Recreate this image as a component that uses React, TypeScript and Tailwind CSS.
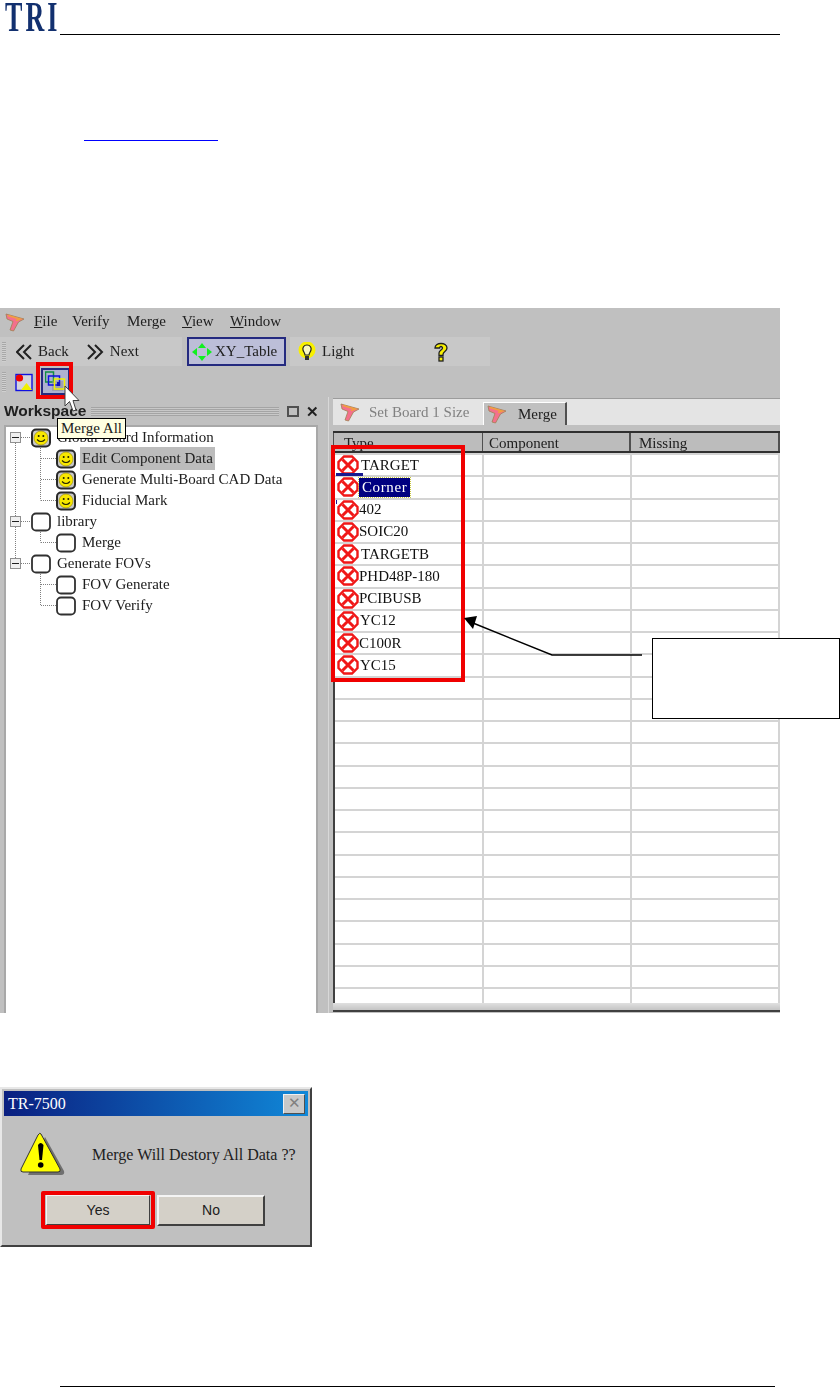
const serif = "font-['Liberation_Serif',serif]";

const rowCount = Array.from({ length: 25 });

const errorRows = [
  { label: "TARGET", gap: "ml-[2px]", cls: "text-[#101010]" },
  { label: "Corner", gap: "ml-0", cls: "bg-[#000080] text-white outline-1 outline-dotted outline-[#c8c840] px-[3px] tracking-[0.6px]" },
  { label: "402", gap: "ml-0", cls: "text-[#101010]" },
  { label: "SOIC20", gap: "ml-0", cls: "text-[#101010]" },
  { label: "TARGETB", gap: "ml-[2px]", cls: "text-[#101010]" },
  { label: "PHD48P-180", gap: "ml-0", cls: "text-[#101010]" },
  { label: "PCIBUSB", gap: "ml-0", cls: "text-[#101010]" },
  { label: "YC12", gap: "ml-[1px]", cls: "text-[#101010]" },
  { label: "C100R", gap: "ml-0", cls: "text-[#101010]" },
  { label: "YC15", gap: "ml-[1px]", cls: "text-[#101010]" },
];

const treeRows = [
  { label: "Global Board Information", depth: 0, smile: true, expander: true },
  { label: "Edit Component Data", depth: 1, smile: true, active: true },
  { label: "Generate Multi-Board CAD Data", depth: 1, smile: true },
  { label: "Fiducial Mark", depth: 1, smile: true },
  { label: "library", depth: 0, smile: false, expander: true },
  { label: "Merge", depth: 1, smile: false },
  { label: "Generate FOVs", depth: 0, smile: false, expander: true },
  { label: "FOV Generate", depth: 1, smile: false },
  { label: "FOV Verify", depth: 1, smile: false },
];

function AppGlyph() {
  return (
    <svg width="20" height="20" viewBox="0 0 20 20" className="shrink-0">
      <path d="M1 2 L19 7 L13.5 10 L8.5 19 L5 18 L8 9.5 L2 7 Z" fill="#f4708c" stroke="#a08050" strokeWidth="0.8" />
      <path d="M3 3.5 L15 7 L11 8.5" fill="none" stroke="#f0a040" strokeWidth="1.8" />
    </svg>
  );
}

function Smiley() {
  return (
    <svg width="20" height="20" viewBox="0 0 20 20" className="shrink-0">
      <rect x="1" y="1.5" width="18" height="17" rx="4" fill="#c8c8c8" stroke="#282828" strokeWidth="2" />
      <circle cx="10" cy="10" r="7" fill="#f8e800" stroke="#807000" strokeWidth="0.5" />
      <circle cx="7.7" cy="8" r="1" fill="#202000" />
      <circle cx="12.3" cy="8" r="1" fill="#202000" />
      <path d="M6 11.5 Q10 15.5 14 11.5" fill="none" stroke="#202000" strokeWidth="1.1" />
    </svg>
  );
}

function EmptyNode() {
  return (
    <svg width="20" height="20" viewBox="0 0 20 20" className="shrink-0">
      <rect x="1" y="1.5" width="18" height="17" rx="4" fill="#fff" stroke="#303030" strokeWidth="1.8" />
    </svg>
  );
}

function ErrorIcon() {
  return (
    <svg width="22" height="20" viewBox="0 0 22 20" className="shrink-0">
      <path d="M7 1.5 H15 L20.5 7 V13 L15 18.5 H7 L1.5 13 V7 Z" fill="#fff" stroke="#f01818" strokeWidth="2.4" />
      <path d="M5.5 4.5 L16.5 15.5 M16.5 4.5 L5.5 15.5" stroke="#f01818" strokeWidth="3" />
    </svg>
  );
}

function Grip() {
  return (
    <div className="h-[20px] w-[4px] shrink-0 bg-[repeating-linear-gradient(to_bottom,#a8a8a8_0,#a8a8a8_1px,#d0d0d0_1px,#d0d0d0_2px)]" />
  );
}

function Chevrons({ flip }: { flip?: boolean }) {
  return (
    <svg width="17" height="16" viewBox="0 0 17 16" className="shrink-0">
      <path
        d={flip ? "M1 1 L8 8 L1 15 M8 1 L15 8 L8 15" : "M8 1 L1 8 L8 15 M15 1 L8 8 L15 15"}
        fill="none"
        stroke="#202020"
        strokeWidth="2"
      />
    </svg>
  );
}

function MoveIcon() {
  return (
    <svg width="20" height="20" viewBox="0 0 20 20" className="shrink-0">
      <path d="M10 1 L14 6 H6 Z M10 19 L14 14 H6 Z M0 10 L5 6 V14 Z M20 10 L15 6 V14 Z" fill="#10f020" />
    </svg>
  );
}

function Bulb() {
  return (
    <svg width="18" height="20" viewBox="0 0 18 20" className="shrink-0">
      <circle cx="9" cy="8" r="8.5" fill="#f8f000" />
      <path d="M9 3 C5.5 3 4.5 6 5 8 C5.5 10 7 11 7 13 H11 C11 11 12.5 10 13 8 C13.5 6 12.5 3 9 3 Z" fill="#f8f8c0" stroke="#202020" strokeWidth="1.2" />
      <rect x="7" y="14" width="4" height="4" fill="#303030" />
    </svg>
  );
}

function HelpGlyph() {
  return (
    <svg width="16" height="20" viewBox="0 0 16 20" className="shrink-0">
      <path d="M2 6 C2 0 14 0 14 6 C14 9.5 10 9.5 10 12.5 V13.5 H6 V11 C6 8 9.5 8 9.5 6 C9.5 4 6.5 4 6.5 6 Z" fill="#f8f000" stroke="#202020" strokeWidth="1.3" />
      <rect x="6" y="15" width="4" height="4" fill="#f8f000" stroke="#202020" strokeWidth="1.3" />
    </svg>
  );
}

function ImageTool() {
  return (
    <svg width="20" height="20" viewBox="0 0 20 20" className="shrink-0">
      <rect x="2" y="2.5" width="16" height="16" fill="#d4d4dc" stroke="#1010e0" strokeWidth="1.4" />
      <circle cx="5.5" cy="6" r="3.6" fill="#f00000" />
      <path d="M7 18 L12.5 11 L18 18 Z" fill="#f0f000" />
    </svg>
  );
}

function MergeTool() {
  return (
    <svg width="22" height="22" viewBox="0 0 22 22" className="shrink-0">
      <rect x="0.5" y="1" width="8" height="10" fill="none" stroke="#109040" strokeWidth="1.5" />
      <rect x="7" y="10" width="11" height="10" fill="#909090" opacity="0.5" />
      <rect x="3.5" y="5" width="11" height="9" fill="none" stroke="#1010e0" strokeWidth="1.5" />
      <rect x="9.5" y="8" width="10" height="10" fill="none" stroke="#f0f000" strokeWidth="1.5" />
      <rect x="12" y="11" width="3" height="4" fill="#1010c0" />
    </svg>
  );
}

function CursorGlyph() {
  return (
    <svg width="16" height="28" viewBox="0 0 16 28">
      <path d="M1 1 V21 L5.5 16.5 L9 26 L12 25 L9 15.5 L15 15.5 Z" fill="#fff" stroke="#404040" strokeWidth="1" />
    </svg>
  );
}

function WarningIcon() {
  return (
    <svg width="46" height="46" viewBox="0 0 46 46" className="shrink-0">
      <path d="M25 5 L44 39 Q45 43 41 43 H8 Z" fill="#707070" />
      <path d="M21 2 L40 37 Q41 40 38 40 H3 Q0 40 1 37 L18 3 Q20 0 21 2 Z" fill="#ffff00" stroke="#303030" strokeWidth="1" />
      <path d="M18 13 Q20.5 9 23.5 13 L22 28 H19.5 Z" fill="#000" />
      <circle cx="20.7" cy="33" r="2.8" fill="#000" />
    </svg>
  );
}

function TreeLines() {
  return (
    <svg width="90" height="190" viewBox="0 0 90 190" className="absolute left-0 top-0">
      <g fill="none" stroke="#808080" strokeDasharray="1 1">
        <path d="M9.5 16 V131 M15 10.5 H25 M15 94.5 H25 M15 136.5 H25" />
        <path d="M34.5 19 V73.5 M35 31.5 H50 M35 52.5 H50 M35 73.5 H50" />
        <path d="M34.5 103 V115.5 M35 115.5 H50" />
        <path d="M34.5 145 V178.5 M35 157.5 H50 M35 178.5 H50" />
      </g>
    </svg>
  );
}

function Arrow() {
  return (
    <svg width="200" height="60" viewBox="0 0 200 60" className="absolute left-[460px] top-[610px]">
      <path d="M13 13 L92 45 H182" fill="none" stroke="#000" strokeWidth="1.4" />
      <path d="M4 8 L17 6 L13 19 Z" fill="#000" />
    </svg>
  );
}

function LogoMark() {
  return (
    <div className="h-[35px] w-[60px] shrink-0 pl-[5px]">
      <span className="block w-[55px] origin-top-left scale-x-[0.62] whitespace-nowrap font-['Liberation_Serif',serif] text-[42px] font-bold leading-[34px] tracking-[5px] text-[#12306f] blur-[0.5px]">
        TRI
      </span>
    </div>
  );
}

function MenuBar() {
  const items = [
    { label: "File", u: "F", rest: "ile", cls: "w-[38px]" },
    { label: "Verify", u: "", rest: "Verify", cls: "w-[55px]" },
    { label: "Merge", u: "", rest: "Merge", cls: "w-[55px]" },
    { label: "View", u: "V", rest: "iew", cls: "w-[48px]" },
    { label: "Window", u: "W", rest: "indow", cls: "w-[60px]" },
  ];
  return (
    <div className="flex h-[29px] items-center pb-[2px] pl-[5px]">
      <AppGlyph />
      <div className="ml-[9px] flex text-[15px] text-[#202020]">
        {items.map((item) => (
          <span key={item.label} className={item.cls}>
            {item.u && <span className="underline">{item.u}</span>}
            {item.rest}
          </span>
        ))}
      </div>
    </div>
  );
}

function ToolBar() {
  return (
    <div className="flex h-[29px] text-[15px] text-[#202020]">
      <div className="flex w-[182px] items-center bg-[#c8c8c8] pl-[2px]">
        <Grip />
        <div className="ml-[10px] flex items-center gap-[5px]">
          <Chevrons />
          <span>Back</span>
        </div>
        <div className="ml-[18px] flex items-center gap-[6px]">
          <Chevrons flip />
          <span>Next</span>
        </div>
      </div>
      <div className="ml-[5px] flex h-[29px] w-[99px] items-center gap-[3px] border-2 border-[#242a80] bg-[#bcbed8] pl-[3px]">
        <MoveIcon />
        <span>XY_Table</span>
      </div>
      <div className="ml-[4px] flex w-[200px] items-center bg-[#c8c8c8] pl-[8px]">
        <Bulb />
        <span className="ml-[6px]">Light</span>
        <div className="ml-[78px]">
          <HelpGlyph />
        </div>
      </div>
    </div>
  );
}

function IconBar() {
  return (
    <div className="flex h-[31px] items-center pl-[2px]">
      <Grip />
      <div className="ml-[8px]">
        <ImageTool />
      </div>
      <div className="ml-[7px] flex h-[27px] w-[29px] items-center justify-center border-2 border-[#242a80] bg-[#aeb2d0]">
        <MergeTool />
      </div>
    </div>
  );
}

function WorkspacePanel() {
  return (
    <div className="flex w-[322px] shrink-0 flex-col pl-[4px]">
      <div className="flex h-[28px] items-center">
        <span className="font-['Liberation_Sans',sans-serif] text-[15.5px] font-bold text-[#202020]">Workspace</span>
        <div className="ml-[5px] h-[9px] w-[188px] bg-[repeating-linear-gradient(to_bottom,#a4a4a4_0,#a4a4a4_1px,#c8c8c8_1px,#c8c8c8_2px)]" />
        <div className="ml-[8px] h-[11px] w-[12px] border-2 border-[#505050]" />
        <span className="ml-[7px] font-['Liberation_Sans',sans-serif] text-[15px] font-bold leading-none text-[#202020]">✕</span>
      </div>
      <div className="relative min-h-0 w-[314px] flex-1 border-2 border-b-0 border-[#a8a8a8] bg-white pl-[4px]">
        <TreeLines />
        {treeRows.map((row) => (
          <div key={row.label} className="relative flex h-[21px] items-center text-[15px] text-[#202020]">
            {row.expander && (
              <div className="mr-[10px] flex h-[11px] w-[11px] shrink-0 items-center justify-center border border-[#909090] bg-[#f0f0f0]">
                <div className="h-px w-[7px] bg-[#202020]" />
              </div>
            )}
            {row.depth === 1 && <div className="w-[46px] shrink-0" />}
            {row.smile ? <Smiley /> : <EmptyNode />}
            <span className={row.active ? "ml-[4px] bg-[#bcbcbc] px-[2px]" : "ml-[6px]"}>{row.label}</span>
          </div>
        ))}
      </div>
    </div>
  );
}

function TableArea() {
  return (
    <div className="ml-[6px] flex min-w-0 flex-1 flex-col border-l border-[#d8d8d8] pl-[4px]">
      <div className="mt-px flex h-[27px] items-end border-t border-[#9c9c9c] bg-[#e4e4e4] text-[15px]">
        <div className="flex h-full w-[150px] items-center pl-[7px] text-[#808080]">
          <AppGlyph />
          <span className="ml-[9px]">Set Board 1 Size</span>
        </div>
        <div className="flex h-[23px] w-[84px] items-center border-r-2 border-t border-l border-r-[#505050] border-t-white border-l-white bg-[#c0c0c0] pl-[3px] text-[#202020]">
          <AppGlyph />
          <span className="ml-[11px]">Merge</span>
        </div>
      </div>
      <div className="mt-[6px] flex h-[22px] border-y-2 border-[#303030] bg-[#bcbcbc] text-[15px] text-[#202020]">
        <div className="w-[150px] border-x border-x-[#505050] pl-[10px] leading-[20px]">Type</div>
        <div className="w-[148px] border-r-2 border-r-[#505050] pl-[6px] leading-[20px]">Component</div>
        <div className="w-[149px] border-r-2 border-r-[#505050] pl-[8px] leading-[20px]">Missing</div>
      </div>
      <div className="min-h-0 flex-1 overflow-hidden border-l-2 border-t-2 border-l-[#404040] border-t-[#d4d4d4] bg-white">
        {rowCount.map((_, i) => {
          const err = errorRows[i];
          return (
            <div key={i} className="flex h-[22.25px] shrink-0 border-b-2 border-[#d4d4d4]">
              <div className="flex w-[149px] items-center border-r-2 border-[#d4d4d4] pl-[2px] text-[15px]">
                {err && (
                  <>
                    <ErrorIcon />
                    <span className={`${err.gap} ${err.cls} leading-[19px]`}>{err.label}</span>
                  </>
                )}
              </div>
              <div className="w-[148px] border-r-2 border-[#d4d4d4]" />
              <div className="w-[148px] border-r-2 border-[#d4d4d4]" />
            </div>
          );
        })}
      </div>
      <div className="h-[7px] bg-[linear-gradient(to_bottom,#e0e0e0,#c4c4c4)]" />
      <div className="h-[3px] border-t-2 border-[#404040] bg-[#c0c0c0]" />
    </div>
  );
}

function MergeWindow() {
  return (
    <div className={`relative mt-[167px] flex h-[705px] w-[780px] flex-col bg-[#c0c0c0] blur-[0.3px] ${serif}`}>
      <MenuBar />
      <ToolBar />
      <IconBar />
      <div className="flex min-h-0 flex-1">
        <WorkspacePanel />
        <TableArea />
      </div>
      <div className="absolute left-[336px] top-[165px] h-[3px] w-[27px] bg-[#1a1a90]" />
      <div className="absolute left-[336px] top-[192px] h-[4px] w-px bg-[#1a1a90]" />
    </div>
  );
}

function ConfirmDialog() {
  return (
    <div className={`relative mt-[74px] flex h-[160px] w-[312px] flex-col border-2 border-[#e8e8e8] border-r-[#404040] border-b-[#404040] bg-[#c0c0c0] p-[2px] ${serif}`}>
      <div className="flex h-[25px] items-center justify-between bg-[linear-gradient(to_right,#0a1f80,#1088d8)] pl-[4px] pr-[3px]">
        <span className="text-[16px] text-white">TR-7500</span>
        <div className="flex h-[20px] w-[22px] items-center justify-center border border-[#f0f0f0] border-r-[#505050] border-b-[#505050] bg-[#c8c8c8] text-[15px] leading-none text-[#808080]">
          ✕
        </div>
      </div>
      <div className="flex items-start pl-[16px] pt-[16px]">
        <WarningIcon />
        <span className="ml-[26px] mt-[13px] text-[16px] leading-[20px] text-[#202020]">Merge Will Destory All Data ??</span>
      </div>
      <div className="ml-[42px] mt-[17px] flex gap-[7px] font-['Liberation_Sans',sans-serif] text-[14px] text-[#202020]">
        <button className="h-[30px] w-[104px] border border-[#f4f4f4] border-r-[#404040] border-b-[#404040] bg-[#d4d0c8]">Yes</button>
        <button className="h-[31px] w-[108px] border-2 border-[#f4f4f4] border-r-[#404040] border-b-[#404040] bg-[#d4d0c8]">No</button>
      </div>
      <div className="absolute left-[39px] top-[102px] h-[38px] w-[114px] rounded-[2px] border-4 border-[#f00000]" />
    </div>
  );
}

export default function App() {
  return (
    <div className="relative flex h-[1387px] w-[840px] flex-col overflow-hidden bg-white">
      <div className="flex h-[35px] items-end">
        <LogoMark />
        <div className="h-px w-[720px] bg-black" />
      </div>
      <div className="ml-[84px] mt-[105px] h-px w-[134px] bg-[#0000ff]" />
      <MergeWindow />
      <ConfirmDialog />
      <div className="ml-[60px] mt-auto h-px w-[715px] bg-black" />

      <div className="absolute left-[36px] top-[362px] h-[37px] w-[37px] border-4 border-[#f00000]" />
      <div className="absolute left-[64px] top-[385px]">
        <CursorGlyph />
      </div>
      <div className={`absolute left-[57px] top-[418px] flex h-[21px] items-center border border-black bg-[#ffffe1] px-[3px] text-[15px] text-[#202020] ${serif}`}>
        Merge All
      </div>
      <div className="absolute left-[331px] top-[445px] h-[237px] w-[134px] border-4 border-[#f00000]" />
      <Arrow />
      <div className="absolute left-[652px] top-[638px] h-[81px] w-[188px] border border-black bg-white" />
    </div>
  );
}
